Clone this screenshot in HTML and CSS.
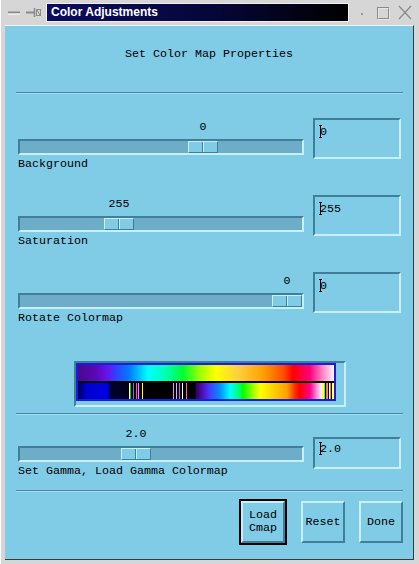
FILE: index.html
```html
<!DOCTYPE html>
<html>
<head>
<meta charset="utf-8">
<title>Color Adjustments</title>
<link rel="stylesheet" href="styles.css">
</head>
<body>
<div class="window">
  <div class="titlebar">
    <div class="tb-left">
      <svg width="46" height="25" viewBox="0 0 46 25">
        <line x1="8" y1="12.5" x2="20" y2="12.5" stroke="#8a8a8a" stroke-width="2"/>
        <line x1="8" y1="14" x2="20" y2="14" stroke="#ffffff" stroke-width="1"/>
        <line x1="26" y1="12.5" x2="34" y2="12.5" stroke="#8a8a8a" stroke-width="2"/>
        <line x1="34.5" y1="8" x2="34.5" y2="17" stroke="#8a8a8a" stroke-width="1.5"/>
        <rect x="36.5" y="9.5" width="4" height="6" fill="none" stroke="#8a8a8a" stroke-width="1"/>
        <line x1="37" y1="10" x2="40" y2="15" stroke="#8a8a8a" stroke-width="1"/>
      </svg>
    </div>
    <div class="title">Color Adjustments</div>
    <div class="tb-right">
      <svg width="69" height="25" viewBox="0 0 69 25">
        <rect x="12" y="13" width="2" height="2" fill="#9a9a9a"/>
        <rect x="28.5" y="7.5" width="11" height="11" fill="none" stroke="#8a8a8a" stroke-width="1"/>
        <rect x="29.5" y="8.5" width="11" height="11" fill="none" stroke="#ffffff" stroke-width="0.6" opacity="0.6"/>
        <line x1="50" y1="6" x2="62" y2="19" stroke="#8a8a8a" stroke-width="1.2"/>
        <line x1="62" y1="6" x2="50" y2="19" stroke="#8a8a8a" stroke-width="1.2"/>
      </svg>
    </div>
  </div>
  <div class="client">
    <div class="heading">Set Color Map Properties</div>
    <div class="sep"></div>

    <div class="row">
      <div class="slider">
        <div class="val"><span class="val-text" style="left:185px">0</span></div>
        <div class="trough"><div class="thumb" style="left:168px"></div></div>
        <div class="label">Background</div>
      </div>
      <div class="box"><span class="caret"></span>0</div>
    </div>

    <div class="row">
      <div class="slider">
        <div class="val"><span class="val-text" style="left:101px">255</span></div>
        <div class="trough"><div class="thumb" style="left:84px"></div></div>
        <div class="label">Saturation</div>
      </div>
      <div class="box"><span class="caret"></span>255</div>
    </div>

    <div class="row">
      <div class="slider">
        <div class="val"><span class="val-text" style="left:269px">0</span></div>
        <div class="trough"><div class="thumb" style="left:252px"></div></div>
        <div class="label">Rotate Colormap</div>
      </div>
      <div class="box"><span class="caret"></span>0</div>
    </div>

    <div class="cbar-frame">
      <div class="cbar">
        <div class="band band-top"></div>
        <div class="band-gap"></div>
        <div class="band band-bottom"></div>
      </div>
    </div>

    <div class="sep sep-b"></div>

    <div class="row row-gamma">
      <div class="slider">
        <div class="val"><span class="val-text" style="left:118px">2.0</span></div>
        <div class="trough"><div class="thumb" style="left:101px"></div></div>
        <div class="label">Set Gamma, Load Gamma Colormap</div>
      </div>
      <div class="box box-short"><span class="caret caret-short"></span>2.0</div>
    </div>

    <div class="sep sep-c"></div>

    <div class="buttons">
      <div class="btn-default"><div class="btn">Load<br>Cmap</div></div>
      <div class="btn">Reset</div>
      <div class="btn">Done</div>
    </div>
  </div>
</div>
</body>
</html>
```

FILE: styles.css
```css
html, body {
  margin: 0;
  padding: 0;
  background: #d4d4d4;
}

.window {
  width: 419px;
  height: 564px;
  box-sizing: border-box;
  background: #d6d6d6;
  border-left: 1px solid #ffffff;
  position: relative;
  display: flex;
  flex-direction: column;
}

.titlebar {
  height: 25px;
  display: flex;
  align-items: flex-start;
  flex: none;
}

.tb-left {
  width: 46px;
  height: 25px;
  margin-left: -1px;
}

.tb-left svg, .tb-right svg {
  display: block;
}

.title {
  margin-top: 3px;
  width: 303px;
  height: 19px;
  box-sizing: border-box;
  border: 1px solid #f0f0f0;
  background: linear-gradient(to right, #0c0c60 0%, #06063a 55%, #000000 100%);
  color: #ffffff;
  font-family: "Liberation Sans", Arial, sans-serif;
  font-weight: bold;
  font-size: 12px;
  line-height: 17px;
  padding-left: 4px;
}

.tb-right {
  width: 69px;
  height: 25px;
}

.client {
  margin-left: 4px;
  width: 409px;
  height: 535px;
  box-sizing: border-box;
  background: #80cbe6;
  border-top: 1px solid #eef6f9;
  border-right: 1px solid #3a3a3a;
  border-bottom: 1px solid #3a3a3a;
  font-family: "Liberation Mono", "DejaVu Sans Mono", monospace;
  font-size: 11.67px;
  color: #000000;
  display: flex;
  flex-direction: column;
  padding-left: 13px;
}

.heading {
  margin-top: 21px;
  line-height: 14px;
  height: 14px;
  text-align: center;
  margin-left: -13px;
}

.sep {
  margin-top: 31px;
  margin-left: -2px;
  width: 387px;
  height: 2px;
  box-sizing: border-box;
  border-top: 1px solid #4a86a4;
  border-bottom: 1px solid #a4dcef;
}

.sep-b { margin-top: 6px; }
.sep-c { margin-top: 12px; }

.row {
  margin-top: 24px;
  display: flex;
  align-items: flex-start;
  gap: 9px;
  height: 53px;
}

.row-gamma {
  margin-top: 10px;
}

.slider {
  width: 286px;
  padding-top: 2px;
  display: flex;
  flex-direction: column;
}

.val {
  position: relative;
  height: 14px;
  line-height: 14px;
}

.val-text {
  position: absolute;
  top: 0;
  transform: translateX(-50%);
  white-space: nowrap;
}

.trough {
  margin-top: 5px;
  height: 16px;
  box-sizing: border-box;
  background: #6eadc7;
  border-top: 2px solid #3f7f9a;
  border-left: 2px solid #3f7f9a;
  border-bottom: 2px solid #c8f0fb;
  border-right: 2px solid #c8f0fb;
  position: relative;
}

.thumb {
  position: absolute;
  top: 0;
  width: 30px;
  height: 12px;
  box-sizing: border-box;
  background: linear-gradient(to right, transparent 13px, #3f7f9a 13px, #3f7f9a 14px, #c8f0fb 14px, #c8f0fb 15px, transparent 15px), #80cbe6;
  border-top: 1px solid #c8f0fb;
  border-left: 1px solid #c8f0fb;
  border-bottom: 1px solid #3f7f9a;
  border-right: 1px solid #3f7f9a;
}

.label {
  margin-top: 2px;
  height: 14px;
  line-height: 14px;
  white-space: nowrap;
}

.box {
  position: relative;
  width: 88px;
  height: 41px;
  box-sizing: border-box;
  border-top: 2px solid #3f7f9a;
  border-left: 2px solid #3f7f9a;
  border-bottom: 2px solid #c8f0fb;
  border-right: 2px solid #c8f0fb;
  padding: 5px 5px 0 5px;
  line-height: 14px;
}

.box-short {
  margin-top: 12px;
  height: 32px;
  padding-top: 3px;
}

.caret {
  position: absolute;
  left: 5px;
  top: 5px;
  width: 1px;
  height: 13px;
  background: #000000;
}

.caret::before, .caret::after {
  content: "";
  position: absolute;
  left: -1px;
  width: 3px;
  height: 1px;
  background: #000000;
}

.caret::before { top: 0; }
.caret::after { bottom: 0; }

.caret-short {
  top: 3px;
}

.cbar-frame {
  margin-top: 36px;
  margin-left: 56px;
  width: 272px;
  height: 46px;
  box-sizing: border-box;
  border-top: 2px solid #3f7f9a;
  border-left: 2px solid #3f7f9a;
  border-bottom: 2px solid #c8f0fb;
  border-right: 2px solid #c8f0fb;
}

.cbar {
  width: 260px;
  height: 38px;
  box-sizing: border-box;
  border: 2px solid #1c1ce0;
  background: #000000;
  display: flex;
  flex-direction: column;
}

.band {
  height: 16px;
  flex: none;
}

.band-gap {
  height: 2px;
  flex: none;
}

.band-top {
  background: linear-gradient(to right,
    #4a0a8a 0px, #5a08b8 18px, #6a10e8 28px, #3040ff 38px, #0080ff 52px,
    #00ffff 70px, #00ffb0 88px, #00ff30 105px, #a0ff00 122px, #ffff00 138px,
    #ffd040 160px, #ffa000 185px, #ff5000 205px, #ff0000 215px, #ff0080 232px,
    #ff80c0 244px, #fff4fa 256px);
}

.band-bottom {
  background: linear-gradient(to right,
    #000050 0px, #0000d0 8px, #0000e0 30px, #000030 32px, #000018 51px,
    #ffffc0 51px, #ffffc0 52px, #00c000 52px, #00c000 53px, #000000 53px, #000000 55px,
    #c040ff 55px, #c040ff 56px, #000000 56px, #000000 58px,
    #ff40ff 58px, #ff40ff 59px, #000000 59px, #000000 60px,
    #ff80ff 60px, #ff80ff 61px, #000000 61px, #000000 64px,
    #ffff40 64px, #ffff40 65px, #000000 65px, #000000 95px,
    #ff80ff 95px, #ff80ff 96px, #000000 96px, #000000 98px,
    #c0c0ff 98px, #c0c0ff 99px, #000000 99px, #000000 101px,
    #ff40ff 101px, #ff40ff 102px, #000000 102px, #000000 104px,
    #ffffff 104px, #ffffff 105px, #000000 105px, #000000 108px,
    #ff60a0 108px, #ff60a0 109px, #000000 109px, #000000 117px,
    #300060 118px, #5010c0 125px, #4040ff 132px, #0090ff 142px, #00ffff 152px,
    #00ff80 160px, #00ff00 165px, #a0ff00 175px, #ffff00 182px, #ffc000 200px,
    #ffa000 209px, #ff2000 218px, #ff0000 222px, #ff0090 232px, #ffb0e0 240px,
    #ffffff 244px,
    #ffff40 244px, #ffff40 246px, #40ff40 246px, #40ff40 247px, #000000 247px, #000000 248px,
    #ff40ff 248px, #ff40ff 249px, #ffa000 249px, #ffa000 250px, #000000 250px, #000000 251px,
    #ffffff 251px, #ffffff 252px, #ff8000 252px, #ff8000 253px, #000000 253px, #000000 254px,
    #ffff80 254px, #ffff80 256px);
}

.buttons {
  margin-top: 7px;
  display: flex;
  justify-content: flex-end;
  align-items: center;
  gap: 14px;
  padding-right: 10px;
}

.btn-default {
  border: 2px solid #000000;
  display: flex;
}

.btn {
  width: 44px;
  height: 42px;
  box-sizing: border-box;
  border-top: 2px solid #c8f0fb;
  border-left: 2px solid #c8f0fb;
  border-bottom: 2px solid #3f7f9a;
  border-right: 2px solid #3f7f9a;
  display: flex;
  align-items: center;
  justify-content: center;
  text-align: center;
  line-height: 13px;
}
```
